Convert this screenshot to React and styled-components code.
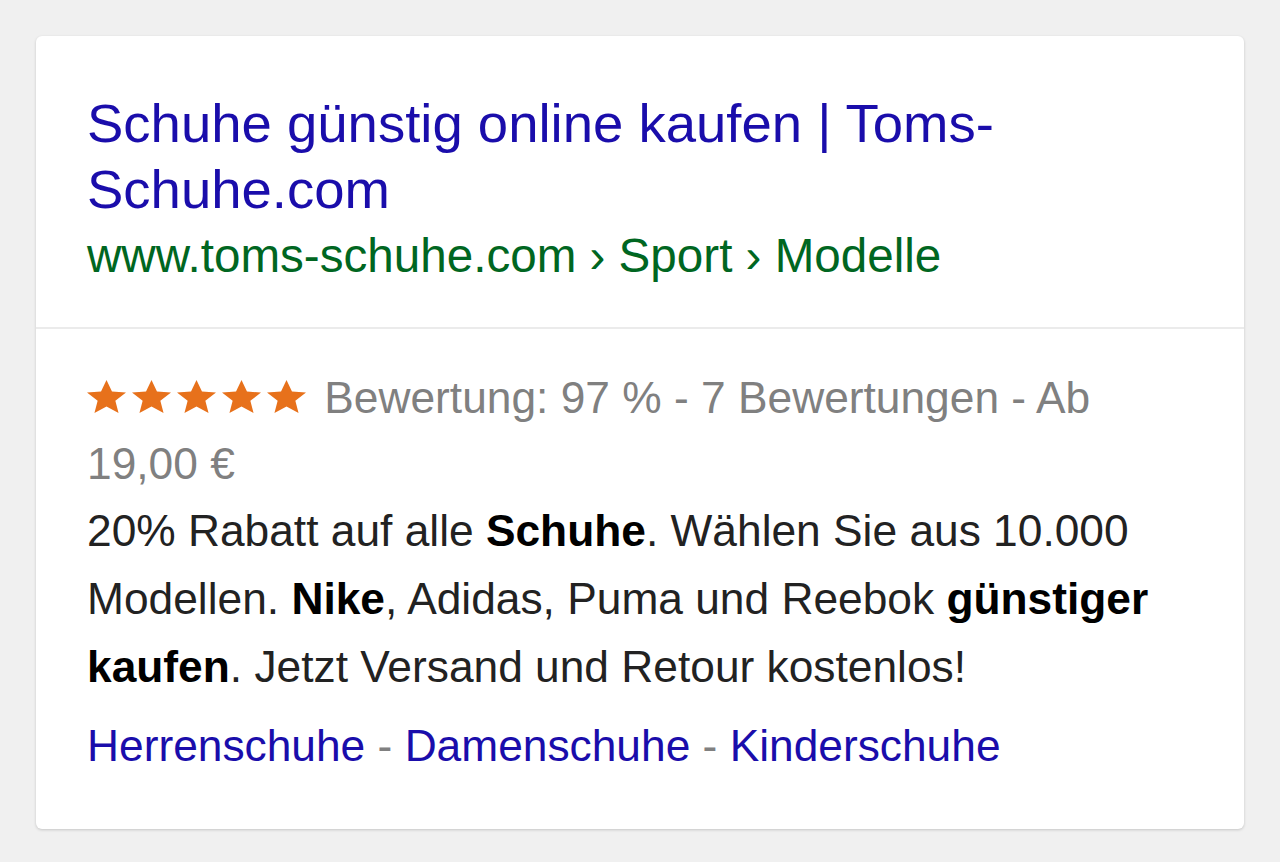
import React from 'react';
import styled, { createGlobalStyle } from 'styled-components';

const GlobalStyle = createGlobalStyle`
	html, body {
		margin: 0;
		padding: 0;
		background: #f0f0f0;
		font-family: "Liberation Sans", Arial, sans-serif;
	}
`;

const Page = styled.div`
	padding: 36px;
	width: 1208px;
`;

const Card = styled.div`
	background: #fff;
	border-radius: 6px;
	box-shadow: 0 1px 3px rgba(0, 0, 0, 0.18);
	overflow: hidden;
`;

const Section = styled.div`
	padding: ${props => props.top}px 51px ${props => props.bottom}px 51px;
	border-top: ${props => props.divided ? '2px solid #ebebeb' : 'none'};
`;

const Title = styled.a`
	display: block;
	font-size: 54.5px;
	line-height: 66px;
	color: #1a0dab;
	text-decoration: none;
`;

const Url = styled.div`
	font-size: 47.6px;
	line-height: 66px;
	color: #006621;
	white-space: nowrap;
`;

const Rating = styled.div`
	font-size: 44.3px;
	line-height: 66px;
	color: #808080;
`;

const Stars = styled.span`
	display: inline-flex;
	gap: 6px;
	margin-right: 6px;
	vertical-align: 0px;
`;

const Snippet = styled.div`
	font-size: 44.3px;
	line-height: 68px;
	color: #222;

	b {
		color: #000;
	}
`;

const Links = styled.div`
	margin-top: 12px;
	font-size: 44.3px;
	line-height: 66px;
	color: #808080;
`;

const SiteLink = styled.a`
	color: #1a0dab;
	text-decoration: none;
`;

const Star = () => (
	<svg width="39" height="33" viewBox="2 2 20 19" preserveAspectRatio="none">
		<path
			d="M12 17.27L18.18 21l-1.64-7.03L22 9.24l-7.19-.61L12 2 9.19 8.63 2 9.24l5.46 4.73L5.82 21z"
			fill="#e7711b"
		/>
	</svg>
);

export default function App() {
	return (
		<Page>
			<GlobalStyle />
			<Card>
				<Section top={55} bottom={38}>
					<Title href="#">Schuhe günstig online kaufen | Toms-Schuhe.com</Title>
					<Url>www.toms-schuhe.com › Sport › Modelle</Url>
				</Section>

				<Section divided top={36} bottom={50}>
					<Rating>
						<Stars>
							<Star /><Star /><Star /><Star /><Star />
						</Stars>
						{' '}Bewertung: 97 % - 7 Bewertungen - Ab 19,00 €
					</Rating>
					<Snippet>
						20% Rabatt auf alle <b>Schuhe</b>. Wählen Sie aus 10.000 Modellen. <b>Nike</b>, Adidas, Puma und Reebok <b>günstiger kaufen</b>. Jetzt Versand und Retour kostenlos!
					</Snippet>
					<Links>
						<SiteLink href="#">Herrenschuhe</SiteLink> - <SiteLink href="#">Damenschuhe</SiteLink> - <SiteLink href="#">Kinderschuhe</SiteLink>
					</Links>
				</Section>
			</Card>
		</Page>
	);
}
